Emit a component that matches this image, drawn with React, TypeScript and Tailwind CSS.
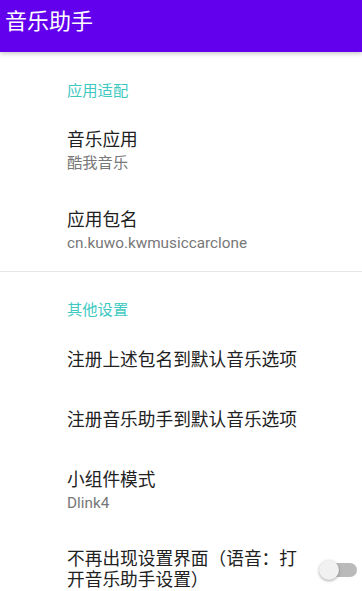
import { ReactNode } from "react";

const font = {
  fontFamily: "Roboto, 'Noto Sans CJK SC', sans-serif",
};

// Category heading, teal like Material's secondary colour
function SectionHeader({ title, className }: { title: string; className: string }) {
  return (
    <div className={`pl-[67px] text-[15.3px] leading-[20px] text-[#3ec9c1] ${className}`}>
      {title}
    </div>
  );
}

function Pref({
  title,
  summary,
  className,
  widget,
}: {
  title: string;
  summary?: string;
  className: string;
  widget?: ReactNode;
}) {
  return (
    <div className={`flex items-center pl-[67px] ${className}`}>
      <div className="flex-1">
        <div className="text-[17.7px] leading-[24px] text-[#212121]">{title}</div>
        {summary && (
          <div className="text-[15.3px] leading-[22px] text-[#777777]">{summary}</div>
        )}
      </div>
      {widget}
    </div>
  );
}

function Switch() {
  return (
    <div className="relative mr-[5px] h-[22px] w-[38px] shrink-0">
      <div className="absolute left-[4px] top-[4px] h-[14px] w-[34px] rounded-full bg-[#bababa]" />
      <div className="absolute left-0 top-[1px] h-[20px] w-[20px] rounded-full bg-[#f1f1f1] shadow-[0_1px_3px_rgba(0,0,0,0.35)]" />
    </div>
  );
}

export default function App() {
  return (
    <div className="h-[591px] w-[362px] overflow-hidden bg-white" style={font}>
      {/* Toolbar */}
      <div className="relative z-10 h-[52px] bg-[#6200ee] pl-[5px] pt-[7px] text-[22px] leading-[30px] text-white shadow-[0_2px_4px_rgba(0,0,0,0.2)]">
        音乐助手
      </div>

      <SectionHeader title="应用适配" className="pt-[29px] pb-[9px]" />
      <Pref title="音乐应用" summary="酷我音乐" className="pt-[18px] pb-[16px]" />
      <Pref
        title="应用包名"
        summary="cn.kuwo.kwmusiccarclone"
        className="pt-[18px] pb-[17px]"
      />

      <div className="h-px bg-[#e6e6e6]" />

      <SectionHeader title="其他设置" className="pt-[28px] pb-[10px]" />
      <Pref title="注册上述包名到默认音乐选项" className="py-[18px]" />
      <Pref title="注册音乐助手到默认音乐选项" className="py-[18px]" />
      <Pref title="小组件模式" summary="Dlink4" className="py-[18px]" />

      <div className="flex items-center pl-[67px] pt-[17px]">
        <div className="w-[238px] text-[17.7px] leading-[21px] text-[#212121]">
          不再出现设置界面（语音：打开音乐助手设置）
        </div>
        <div className="flex flex-1 justify-end">
          <Switch />
        </div>
      </div>
    </div>
  );
}
